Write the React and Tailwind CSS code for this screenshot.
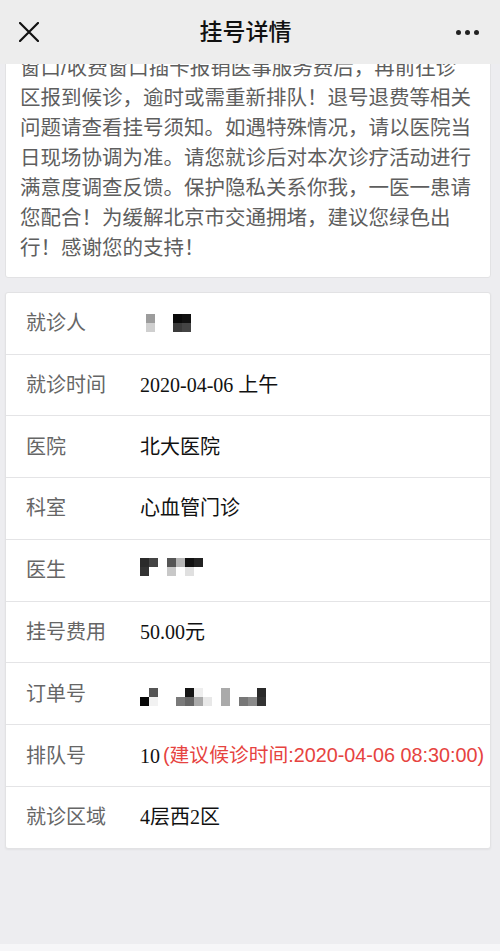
const notice = [
  '窗口/收费窗口插卡报销医事服务费后，再前往诊',
  '区报到候诊，逾时或需重新排队！退号退费等相关',
  '问题请查看挂号须知。如遇特殊情况，请以医院当',
  '日现场协调为准。请您就诊后对本次诊疗活动进行',
  '满意度调查反馈。保护隐私关系你我，一医一患请',
  '您配合！为缓解北京市交通拥堵，建议您绿色出',
  '行！感谢您的支持！',
]

// pixelated (masked) personal info, each cell is 9px
function Mosaic({ cols }) {
  return (
    <div className="flex items-start">
      {cols.map((c, i) =>
        c === null ? (
          <div key={i} className="w-[9px]" />
        ) : (
          <div key={i} className="flex flex-col">
            <div className="w-[9px] h-[9px]" style={{ background: c[0] }} />
            <div className="w-[9px] h-[9px]" style={{ background: c[1] }} />
          </div>
        )
      )}
    </div>
  )
}

const W = '#ffffff'

function Row({ label, children, first }) {
  return (
    <div className={`flex items-center pl-[20px] ${first ? 'h-[60.5px]' : 'h-[61.8px] border-t border-[#e4e4e6]'}`}>
      <div className="w-[114px] shrink-0 text-[20px] text-[#666] font-['Liberation_Sans','Noto_Sans_CJK_SC',sans-serif]">
        {label}
      </div>
      <div className="text-[20px] text-[#111] font-['Liberation_Serif','Noto_Sans_CJK_SC',serif] whitespace-nowrap flex items-center">
        {children}
      </div>
    </div>
  )
}

export default function App() {
  return (
    <div className="w-[500px] h-[951px] bg-[#ededf0] flex flex-col overflow-hidden font-['Liberation_Sans','Noto_Sans_CJK_SC',sans-serif]">
      {/* top bar */}
      <div className="relative z-10 h-[64px] shrink-0 bg-[#ededed] flex items-center justify-between px-[19px]">
        <svg width="20" height="20" viewBox="0 0 20 20" className="text-[#111]">
          <path d="M1 1 L19 19 M19 1 L1 19" stroke="currentColor" strokeWidth="2.2" strokeLinecap="round" />
        </svg>
        <div className="text-[23px] font-medium text-[#111] mr-[4px]">挂号详情</div>
        <div className="flex gap-[4px] pr-[2px]">
          <span className="w-[5px] h-[5px] rounded-full bg-[#222]" />
          <span className="w-[5px] h-[5px] rounded-full bg-[#222]" />
          <span className="w-[5px] h-[5px] rounded-full bg-[#222]" />
        </div>
      </div>

      <div className="flex-1 overflow-hidden flex flex-col">
        {/* notice card, scrolled so the first line is under the bar */}
        <div className="mt-[-23px] ml-[5px] w-[486px] bg-white border border-[#e2e2e4] rounded-[3px] px-[14px] pt-[11px] pb-[14px] text-[20.5px] leading-[30px] text-[#5e5e5e]">
          {notice.map((l, i) => (
            <div key={i} className="whitespace-nowrap">{l}</div>
          ))}
        </div>

        {/* detail card */}
        <div className="mt-[14px] ml-[5px] w-[486px] bg-white border border-[#e2e2e4] rounded-[3px] shadow-[0_1px_2px_rgba(0,0,0,0.05)]">
          <Row label="就诊人" first>
            <div className="ml-[6px]">
              <Mosaic cols={[['#9c9c9c', '#cfcfcf'], null, null, ['#0a0a0a', '#3a3a3a'], ['#111', '#444']]} />
            </div>
          </Row>
          <Row label="就诊时间">2020-04-06 上午</Row>
          <Row label="医院">北大医院</Row>
          <Row label="科室">心血管门诊</Row>
          <Row label="医生">
            <div className="-mt-[6px]">
              <Mosaic cols={[['#2a2a2a', '#333'], ['#444', W], null, ['#555', '#c8c8c8'], ['#b5b5b5', W], ['#111', '#e0e0e0'], ['#222', W]]} />
            </div>
          </Row>
          <Row label="挂号费用">50.00元</Row>
          <Row label="订单号">
            <div className="mt-[6px]">
              <Mosaic
                cols={[
                  [W, '#080808'], ['#555', '#f2f2f2'], null, null,
                  [W, '#7a7a7a'], ['#151515', '#666'], ['#eee', '#aaa'], [W, '#e8e8e8'], null,
                  ['#aaa', '#aaa'], null,
                  [W, '#777'], [W, '#8a8a8a'], ['#2a2a2a', '#333'],
                ]}
              />
            </div>
          </Row>
          <Row label="排队号">
            10
            <span className="ml-[3px] text-[19.8px] text-[#e64340] font-['Liberation_Sans','Noto_Sans_CJK_SC',sans-serif]">
              (建议候诊时间:2020-04-06 08:30:00)
            </span>
          </Row>
          <Row label="就诊区域">4层西2区</Row>
        </div>

        <div className="flex-1" />
        <div className="h-[7px] bg-[#f6f6f8]" />
      </div>
    </div>
  )
}
